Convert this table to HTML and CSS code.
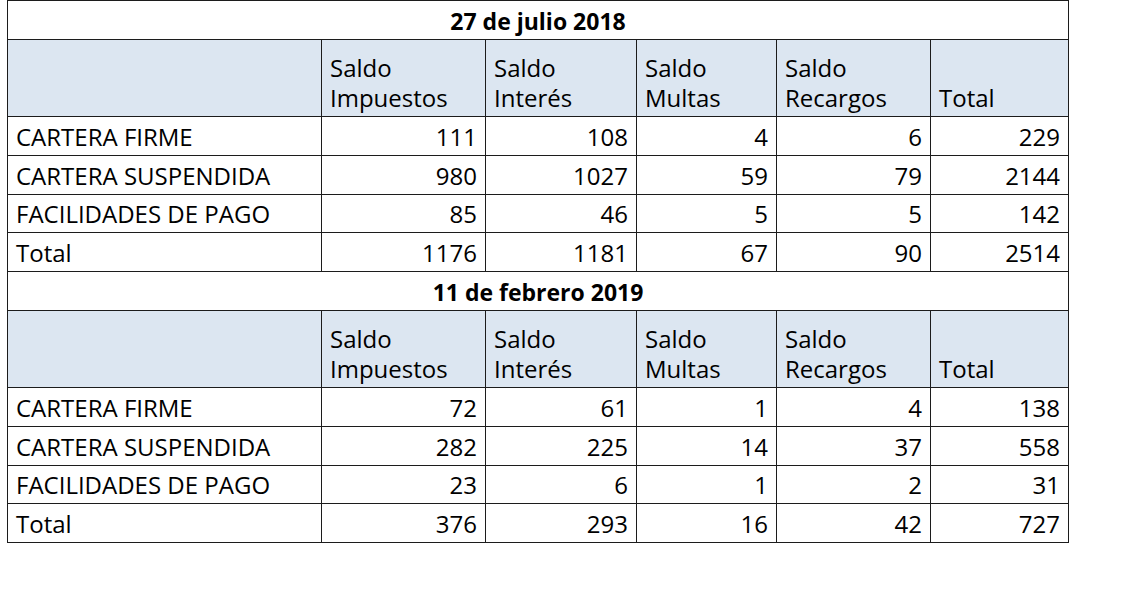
FILE: index.html
```html
<!DOCTYPE html>
<html lang="es">
<head>
<meta charset="utf-8">
<title>Cartera</title>
<link rel="stylesheet" href="styles.css">
</head>
<body>
<table class="sheet">
  <colgroup>
    <col class="c-label"><col class="c-imp"><col class="c-int"><col class="c-mul"><col class="c-rec"><col class="c-tot">
  </colgroup>
  <tbody>
    <tr class="title"><td colspan="6">27 de julio 2018</td></tr>
    <tr class="head"><td></td><td>Saldo<br>Impuestos</td><td>Saldo<br>Interés</td><td>Saldo<br>Multas</td><td>Saldo<br>Recargos</td><td>Total</td></tr>
    <tr class="row"><td>CARTERA FIRME</td><td>111</td><td>108</td><td>4</td><td>6</td><td>229</td></tr>
    <tr class="row"><td>CARTERA SUSPENDIDA</td><td>980</td><td>1027</td><td>59</td><td>79</td><td>2144</td></tr>
    <tr class="row"><td>FACILIDADES DE PAGO</td><td>85</td><td>46</td><td>5</td><td>5</td><td>142</td></tr>
    <tr class="row"><td>Total</td><td>1176</td><td>1181</td><td>67</td><td>90</td><td>2514</td></tr>
    <tr class="title"><td colspan="6">11 de febrero 2019</td></tr>
    <tr class="head"><td></td><td>Saldo<br>Impuestos</td><td>Saldo<br>Interés</td><td>Saldo<br>Multas</td><td>Saldo<br>Recargos</td><td>Total</td></tr>
    <tr class="row"><td>CARTERA FIRME</td><td>72</td><td>61</td><td>1</td><td>4</td><td>138</td></tr>
    <tr class="row"><td>CARTERA SUSPENDIDA</td><td>282</td><td>225</td><td>14</td><td>37</td><td>558</td></tr>
    <tr class="row"><td>FACILIDADES DE PAGO</td><td>23</td><td>6</td><td>1</td><td>2</td><td>31</td></tr>
    <tr class="row"><td>Total</td><td>376</td><td>293</td><td>16</td><td>42</td><td>727</td></tr>
  </tbody>
</table>
</body>
</html>
```
FILE: styles.css
```css
html, body {
  margin: 0;
  padding: 0;
  background: #ffffff;
}
body {
  padding: 0 0 0 7px;
  font-family: "Open Sans", "Noto Sans", sans-serif;
  color: #000000;
}
.sheet {
  border-collapse: collapse;
  table-layout: fixed;
  width: 1061px;
  font-size: 24px;
}
.c-label { width: 314px; }
.c-imp { width: 164px; }
.c-int { width: 151px; }
.c-mul { width: 140px; }
.c-rec { width: 154px; }
.c-tot { width: 138px; }
.sheet td {
  border: 1px solid #1c1c1c;
  padding: 0 8px 4px 8px;
  vertical-align: bottom;
  line-height: 29px;
  white-space: nowrap;
  overflow: hidden;
}
.title td {
  height: 35px;
  text-align: center;
  font-weight: 700;
  font-size: 23px;
  padding-bottom: 3px;
}
.head td {
  height: 73px;
  background: #dce6f1;
  text-align: left;
  padding-bottom: 3px;
  line-height: 30px;
}
.row td {
  height: 33.75px;
  text-align: right;
}
.row td:first-child {
  text-align: left;
}
```
